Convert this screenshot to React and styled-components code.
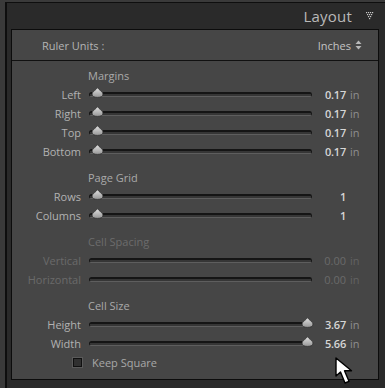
import React from "react";
import styled, { createGlobalStyle } from "styled-components";

const GlobalStyle = createGlobalStyle`
  html, body {
    margin: 0;
    padding: 0;
    background: #2a2a2a;
  }
  body {
    font-family: "Open Sans", "DejaVu Sans", sans-serif;
  }
`;

const Frame = styled.div`
  position: relative;
  width: 385px;
  height: 388px;
  box-sizing: border-box;
  background: #3a3a3a;
  padding: 2px 0 0 5px;
  overflow: hidden;
`;

const Panel = styled.div`
  height: 100%;
  box-sizing: border-box;
  background: #2a2a2a;
  border-left: 2px solid #0e0e0e;
  border-top: 1px solid #0e0e0e;
  padding: 0 6px 0 4px;
`;

const Header = styled.div`
  height: 26px;
  display: flex;
  align-items: center;
  justify-content: flex-end;
  gap: 14px;
  padding-right: 5px;
`;

const Title = styled.span`
  font-size: 15px;
  color: #b9b9b9;
  letter-spacing: 0.2px;
`;

const Box = styled.div`
  border: 1px solid #0c0c0c;
  background: #464646;
  height: 351px;
  box-sizing: border-box;
`;

const RulerRow = styled.div`
  height: 30px;
  display: flex;
  align-items: center;
  justify-content: space-between;
  padding: 0 16px 0 30px;
  border-bottom: 1px solid #111;
  font-size: 11px;
  color: #b4b4b4;
`;

const Select = styled.span`
  display: flex;
  align-items: center;
  gap: 4px;
  color: #c4c4c4;
`;

const Body = styled.div`
  padding-top: 5px;
`;

const Section = styled.div`
  margin-bottom: 7px;
`;

const SectionTitle = styled.div`
  height: 19px;
  line-height: 19px;
  padding-left: 76px;
  font-size: 11px;
  color: ${(p) => (p.$disabled ? "#6c6c6c" : "#aaaaaa")};
`;

const Row = styled.div`
  height: 19px;
  display: grid;
  grid-template-columns: 77px 223px 34px 18px;
  align-items: center;
  font-size: 11px;
`;

const Label = styled.span`
  margin-right: 8px;
  color: ${(p) => (p.$disabled ? "#6a6a6a" : "#b2b2b2")};
  justify-self: end;
`;

const Track = styled.div`
  position: relative;
  height: 5px;
  box-sizing: border-box;
  border-radius: 3px;
  background: #363636;
  border-top: 2px solid #151515;
  border-left: 1px solid #151515;
  border-right: 1px solid #181818;
  border-bottom: 1px solid #5e5e5e;
`;

const Thumb = styled.svg`
  position: absolute;
  top: -7px;
  margin-left: -7px;
  width: 13px;
  height: 11px;
`;

const Value = styled.span`
  text-align: right;
  color: ${(p) => (p.$disabled ? "#6a6a6a" : "#d6d6d6")};
  font-weight: ${(p) => (p.$disabled ? 400 : 600)};
  letter-spacing: ${(p) => (p.$disabled ? 0 : "-0.2px")};
`;

const Unit = styled.span`
  padding-left: 4px;
  color: ${(p) => (p.$disabled ? "#626262" : "#8e8e8e")};
`;

const CheckRow = styled.div`
  height: 19px;
  display: flex;
  align-items: center;
  padding-left: 61px;
  gap: 10px;
  font-size: 11px;
  color: #a8a8a8;
`;

const Check = styled.span`
  width: 9px;
  height: 9px;
  box-sizing: border-box;
  border: 1px solid #101010;
  background: #303030;
  box-shadow: 0 0 0 1px #5a5a5a;
`;

const Cursor = styled.svg`
  position: absolute;
  left: 335px;
  top: 357px;
  width: 22px;
  height: 30px;
`;

const DottedTriangle = () => (
  <svg width="8" height="8" viewBox="0 0 8 8">
    {[0, 1, 2, 3].map((r) =>
      Array.from({ length: 4 - r }).map((_, i) => (
        <rect
          key={`${r}-${i}`}
          x={r + i * 2}
          y={r * 2}
          width="1.2"
          height="1.2"
          fill="#c8c8c8"
        />
      ))
    )}
  </svg>
);

const UpDown = () => (
  <svg width="7" height="10" viewBox="0 0 7 10">
    <path d="M0.5 4 L3.5 0.5 L6.5 4 Z" fill="#b8b8b8" />
    <path d="M0.5 6 L3.5 9.5 L6.5 6 Z" fill="#b8b8b8" />
  </svg>
);

const ThumbShape = ({ pos }) => (
  <Thumb viewBox="0 0 13 11" style={{ left: `${pos}px` }}>
    <defs>
      <linearGradient id="tg" x1="0" y1="0" x2="0" y2="1">
        <stop offset="0" stopColor="#e2e2e2" />
        <stop offset="1" stopColor="#969696" />
      </linearGradient>
    </defs>
    <path
      d="M6.5 0.6 C7.6 2.8 12 4.8 12 7 C12 9.3 9.8 10.4 6.5 10.4 C3.2 10.4 1 9.3 1 7 C1 4.8 5.4 2.8 6.5 0.6 Z"
      fill="url(#tg)"
      stroke="#262626"
      strokeWidth="0.7"
    />
  </Thumb>
);

const SliderRow = ({ label, value, unit, pos, disabled }) => (
  <Row>
    <Label $disabled={disabled}>{label}</Label>
    <Track>{!disabled && <ThumbShape pos={pos} />}</Track>
    <Value $disabled={disabled}>{value}</Value>
    <Unit $disabled={disabled}>{unit}</Unit>
  </Row>
);

const sections = [
  {
    title: "Margins",
    rows: [
      { label: "Left", value: "0.17", unit: "in", pos: 8 },
      { label: "Right", value: "0.17", unit: "in", pos: 8 },
      { label: "Top", value: "0.17", unit: "in", pos: 8 },
      { label: "Bottom", value: "0.17", unit: "in", pos: 8 },
    ],
  },
  {
    title: "Page Grid",
    rows: [
      { label: "Rows", value: "1", unit: "", pos: 8 },
      { label: "Columns", value: "1", unit: "", pos: 8 },
    ],
  },
  {
    title: "Cell Spacing",
    disabled: true,
    rows: [
      { label: "Vertical", value: "0.00", unit: "in" },
      { label: "Horizontal", value: "0.00", unit: "in" },
    ],
  },
];

export default function App() {
  return (
    <>
      <GlobalStyle />
      <Frame>
        <Panel>
          <Header>
            <Title>Layout</Title>
            <DottedTriangle />
          </Header>
          <Box>
            <RulerRow>
              <span>Ruler Units :</span>
              <Select>
                Inches <UpDown />
              </Select>
            </RulerRow>
            <Body>
              {sections.map((s) => (
                <Section key={s.title}>
                  <SectionTitle $disabled={s.disabled}>{s.title}</SectionTitle>
                  {s.rows.map((r) => (
                    <SliderRow key={r.label} {...r} disabled={s.disabled} />
                  ))}
                </Section>
              ))}
              <Section>
                <SectionTitle>Cell Size</SectionTitle>
                <SliderRow label="Height" value="3.67" unit="in" pos={218} />
                <SliderRow label="Width" value="5.66" unit="in" pos={218} />
                <CheckRow>
                  <Check />
                  Keep Square
                </CheckRow>
              </Section>
            </Body>
          </Box>
        </Panel>
        <Cursor viewBox="0 0 22 30">
          <path
            d="M1 1 L1 19 L5.5 15 L10 26 L14 24.3 L9.5 13.8 L16.5 13.8 Z"
            fill="#ffffff"
            stroke="#000000"
            strokeWidth="1.4"
            strokeLinejoin="round"
          />
        </Cursor>
      </Frame>
    </>
  );
}
